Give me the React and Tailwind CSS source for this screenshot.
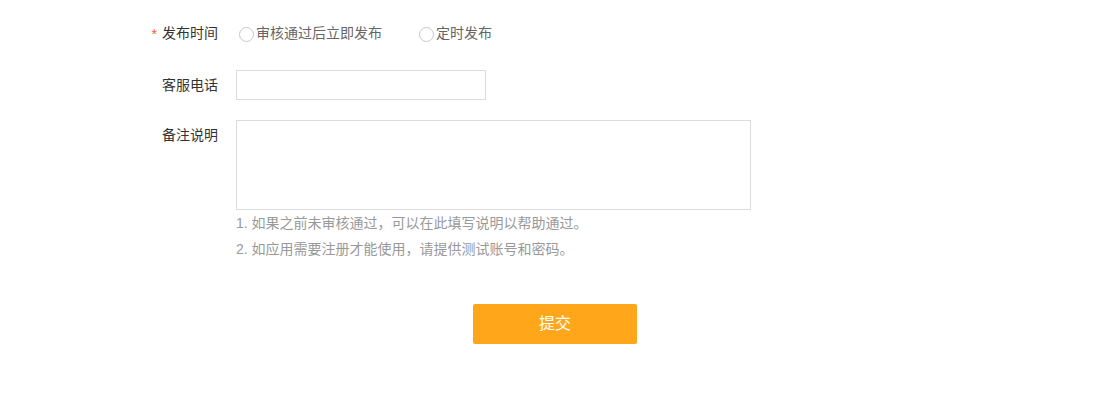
import React from 'react'

const font = { fontFamily: '"Liberation Sans", "Noto Sans CJK SC", sans-serif' }

const Radio = ({ label }) => (
  <label className="flex items-center gap-[2px] text-[14px] text-[#666] cursor-pointer">
    <span className="w-[15px] h-[15px] rounded-full border border-[#c8c8c8] bg-white relative top-[1px]" />
    {label}
  </label>
)

const Row = ({ label, required, top, children }) => (
  <div className={`flex ${top ? 'items-start' : 'items-center'}`}>
    <div className="w-[218px] shrink-0 h-[30px] flex items-center justify-end text-[14px] text-[#333]">
      {required && <span className="text-[#f5602f] mr-[5px] relative top-[1px]">*</span>}
      {label}
    </div>
    <div className="ml-[18px]">{children}</div>
  </div>
)

export default function App() {
  return (
    <div className="w-[1118px] h-[410px] bg-white pt-[18px]" style={font}>
      <Row label="发布时间" required>
        <div className="flex items-center gap-[37px] pl-[3px]">
          <Radio label="审核通过后立即发布" />
          <Radio label="定时发布" />
        </div>
      </Row>
      <div className="flex flex-col gap-[20px] mt-[22px]">
        <Row label="客服电话">
          <input className="block w-[250px] h-[30px] border border-[#dcdcdc] outline-none px-2 text-[14px]" />
        </Row>
        <Row label="备注说明" top>
          <textarea className="block w-[515px] h-[90px] border border-[#dcdcdc] outline-none resize-none p-2 text-[14px]" />
          <div className="text-[14px] text-[#999] leading-[26px]">
            <p>1. 如果之前未审核通过，可以在此填写说明以帮助通过。</p>
            <p>2. 如应用需要注册才能使用，请提供测试账号和密码。</p>
          </div>
        </Row>
      </div>
      <div className="mt-[42px] pl-[473px]">
        <button className="w-[164px] h-[40px] rounded-[2px] bg-[#ffa61a] text-white text-[16px]">
          提交
        </button>
      </div>
    </div>
  )
}
